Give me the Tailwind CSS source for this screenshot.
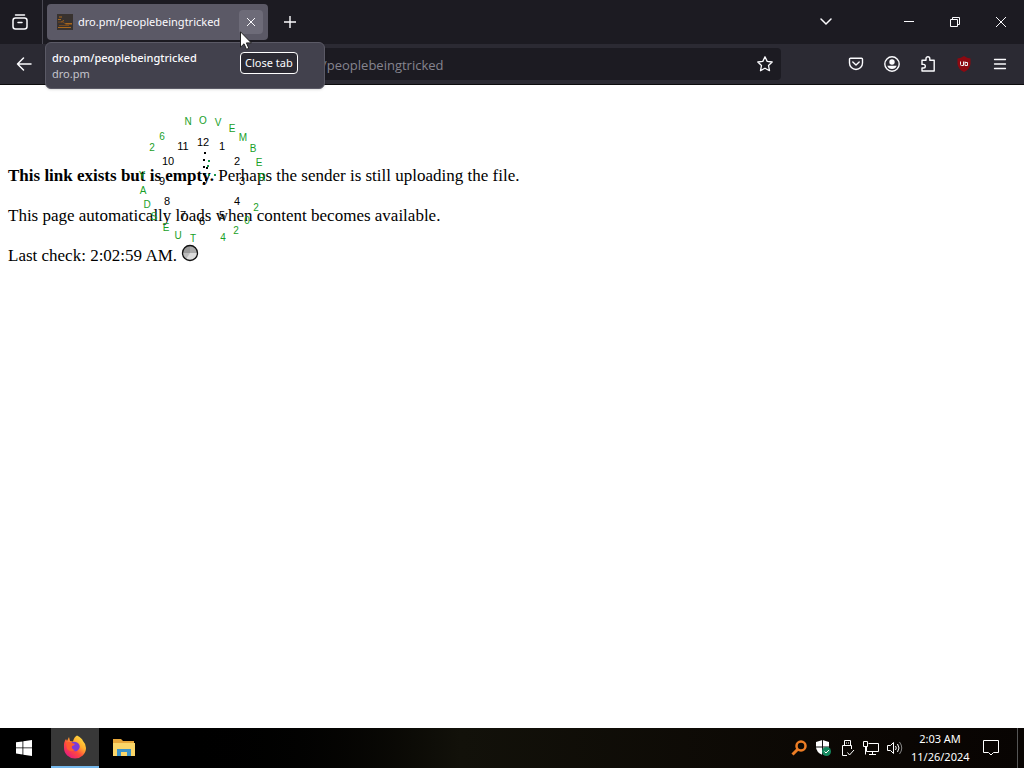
<!DOCTYPE html>
<html lang="en">
<head>
<meta charset="utf-8">
<title>dro.pm/peoplebeingtricked</title>
<script src="https://cdn.jsdelivr.net/npm/@tailwindcss/browser@4"></script>
</head>
<body class="min-h-screen flex flex-col bg-white font-['Noto_Sans',sans-serif] text-[11px]">

<header class="relative text-[#fbfbfe]">
  <div class="h-11 flex items-center bg-[#1c1b22]">
    <button aria-label="Firefox View" class="w-[43px] h-11 shrink-0 flex items-center pl-3 border-r border-[#4a4953]">
      <svg class="size-4" viewBox="0 0 16 16" fill="none" stroke="currentColor" stroke-width="1.500" stroke-linecap="round"><path d="M3.500 1H12.500"/><rect x="1" y="4" width="14" height="11" rx="2.500"/><path d="M6 8.500H10"/></svg>
    </button>
    <div class="ml-1 h-9 w-[221px] flex items-center rounded bg-[#5b5966] pl-[10px] pr-[5px]">
      <svg class="size-4 shrink-0" viewBox="0 0 16 16"><rect width="16" height="16" fill="#38322f"/><path d="M2 3H5M1 5.500H4M4 8L7 6.500M8 9.500H15M1 13.500H14" stroke="#a8681c" fill="none"/><path d="M1 8H6L9 10.500H15M2 11.500H12" stroke="#74491f" fill="none"/></svg>
      <span class="ml-[5px] grow whitespace-nowrap">dro.pm/peoplebeingtricked</span>
      <button aria-label="Close tab" class="size-6 flex items-center justify-center rounded bg-[#6d6b78]">
        <svg class="size-2" viewBox="0 0 8 8" fill="none" stroke="currentColor"><path d="M0 0L8 8M8 0L0 8"/></svg>
      </button>
    </div>
    <button aria-label="New tab" class="ml-4 grow flex">
      <svg class="size-3" viewBox="0 0 12 12" fill="none" stroke="currentColor" stroke-width="1.400"><path d="M6 0V12M0 6H12"/></svg>
    </button>
    <button aria-label="List all tabs" class="mr-[44px] w-8 flex justify-center">
      <svg class="w-3 h-2" viewBox="0 0 12 8" fill="none" stroke="currentColor" stroke-width="1.500" stroke-linecap="round"><path d="M1 1L6 6L11 1"/></svg>
    </button>
    <button aria-label="Minimize" class="w-[46px] flex justify-center"><svg class="size-[10px]" viewBox="0 0 10 10" stroke="currentColor"><path d="M0 4.500H10"/></svg></button>
    <button aria-label="Restore" class="w-[46px] flex justify-center"><svg class="size-[10px]" viewBox="0 0 10 10" fill="none" stroke="currentColor"><path d="M.5 2.500H7.500V9.500H.5ZM2.500 2.500V.5H9.500V7.500H7.500"/></svg></button>
    <button aria-label="Close" class="w-[46px] flex justify-center"><svg class="size-[10px]" viewBox="0 0 10 10" fill="none" stroke="currentColor"><path d="M0 0L10 10M10 0L0 10"/></svg></button>
  </div>

  <div class="h-[41px] flex items-center bg-[#2b2a33] border-b border-[#0c0c0d] pl-4">
    <button aria-label="Back" class="size-4 shrink-0"><svg class="size-4" viewBox="0 0 16 16" fill="none" stroke="currentColor" stroke-width="1.500" stroke-linecap="round" stroke-linejoin="round"><path d="M15 8H1.500M7.500 2L1.500 8L7.500 14"/></svg></button>
    <div class="ml-[13px] h-8 grow flex items-center rounded bg-[#1c1b22] pr-2">
      <input aria-label="Address" value="/peoplebeingtricked" class="grow min-w-0 bg-transparent pl-[277px] pt-[3px] font-['Open_Sans',sans-serif] text-[13px] text-[#85848f] outline-none">
      <button aria-label="Bookmark this page"><svg class="size-4" viewBox="0 0 16 16" fill="none" stroke="currentColor" stroke-width="1.300" stroke-linejoin="round"><path d="M8 .8L10.200 5.400L15.200 6L11.500 9.500L12.500 14.700L8 12.200L3.500 14.700L4.500 9.500L.8 6L5.800 5.400Z"/></svg></button>
    </div>
    <nav class="ml-[67px] mr-4 flex items-center gap-5">
      <button aria-label="Save to Pocket"><svg class="size-4" viewBox="0 0 16 16" fill="none" stroke="currentColor" stroke-width="1.400" stroke-linecap="round" stroke-linejoin="round"><path d="M2.500 2.200H13.500A1 1 0 0 1 14.500 3.200V7A6.500 6.500 0 0 1 1.500 7V3.200A1 1 0 0 1 2.500 2.200ZM4.800 6L8 9L11.200 6"/></svg></button>
      <button aria-label="Account"><svg class="size-4" viewBox="0 0 16 16"><circle cx="8" cy="8" r="7.200" fill="none" stroke="currentColor" stroke-width="1.400"/><circle cx="8" cy="6" r="2.700" fill="currentColor"/><path d="M3.300 9.800H12.700A5 5 0 0 1 3.300 9.800Z" fill="currentColor"/></svg></button>
      <button aria-label="Extensions"><svg class="size-4" viewBox="0 0 16 16" fill="none" stroke="currentColor" stroke-width="1.400" stroke-linejoin="round"><path d="M2 7V4.200H6V2.600A1.900 1.900 0 0 1 9.800 2.600V4.200H14.200V15H2V12H3.500A1.800 1.800 0 0 0 3.500 8.400H2Z"/></svg></button>
      <button aria-label="uBlock Origin"><svg class="size-4" viewBox="0 0 16 16"><path d="M8 0Q11 2 14.500 2.500V8Q14 13 8 16Q2 13 1.500 8V2.500Q5 2 8 0Z" fill="#8d0911"/><path d="M4.500 5.500V8.500Q4.500 9.500 5.500 9.500H7.500V5.500M9 5.500V9.500H11.500V6.500H9" fill="none" stroke="#eee"/></svg></button>
      <button aria-label="Menu"><svg class="size-4" viewBox="0 0 16 16" stroke="currentColor" stroke-width="1.300" stroke-linecap="round"><path d="M2.500 3.500H13.500M2.500 8H13.500M2.500 12.500H13.500"/></svg></button>
    </nav>
  </div>

  <div class="absolute left-[45px] top-[42px] w-[280px] h-[47px] z-10 rounded-md border border-[#5b5a66] bg-[#42414d] px-[6px] pt-[7px] leading-4 shadow">
    <p class="font-medium">dro.pm/peoplebeingtricked</p>
    <p class="text-[#c4c4cc]">dro.pm</p>
  </div>
  <div role="tooltip" class="absolute left-[240px] top-[52px] z-20 h-[22px] rounded border border-white bg-[#2b2a33] px-1 leading-5 whitespace-nowrap">Close tab</div>
  <svg class="absolute left-[240px] top-[31px] z-30 w-3 h-[19px]" viewBox="0 0 12 19"><path d="M.5 .8V16.200L4 12.800L6.500 18.300L8.800 17.300L6.400 11.900H11.300Z" fill="#fff" stroke="#222"/></svg>
</header>

<main class="relative grow px-2 pt-[81px] font-['Liberation_Serif',serif] text-[17px] leading-5 text-black">
  <p class="mb-5"><b>This link exists but is empty.</b> Perhaps the sender is still uploading the file.</p>
  <p class="mb-5">This page automatically loads when content becomes available.</p>
  <p class="flex">Last check: 2:02:59 AM.
    <svg class="ml-1 -mt-[2px] size-[18px]" viewBox="0 0 18 18"><circle cx="9" cy="9" r="7.500" fill="#ddd"/><path d="M9 9H1.500A7.500 7.500 0 0 1 9 1.500Z" fill="#999"/><path d="M9 9V1.500A7.500 7.500 0 0 1 16.500 9Z" fill="#aaa"/><path d="M9 9H1.500A7.500 7.500 0 0 0 5 15.300Z" fill="#bbb"/><circle cx="9" cy="9" r="7.500" fill="none" stroke="#111" stroke-width="1.300"/></svg>
  </p>

  <svg class="absolute left-[133px] top-[25px] w-[140px] h-[140px] font-['Liberation_Sans',sans-serif]" viewBox="133 110 140 140" text-anchor="middle">
    <g font-size="10" fill="#18a028">
      <text x="188" y="125">N</text><text x="203" y="124">O</text><text x="218" y="126">V</text><text x="232" y="132">E</text><text x="243" y="141">M</text><text x="253" y="152">B</text><text x="259" y="166">E</text><text x="262" y="181">R</text>
      <text x="256" y="211">2</text><text x="247" y="224">0</text><text x="236" y="234">2</text><text x="223" y="241">4</text>
      <text x="193" y="242">T</text><text x="178" y="239">U</text><text x="166" y="231">E</text><text x="154" y="220">S</text><text x="147" y="208">D</text><text x="143" y="194">A</text><text x="142" y="179">Y</text>
      <text x="152" y="151">2</text><text x="162" y="140">6</text>
    </g>
    <g font-size="11" fill="#000">
      <text x="203" y="146">12</text><text x="222" y="150">1</text><text x="237" y="165">2</text><text x="242" y="185">3</text><text x="237" y="205">4</text><text x="222" y="219">5</text><text x="202" y="225">6</text><text x="183" y="219">7</text><text x="167" y="205">8</text><text x="162" y="185">9</text><text x="168" y="165">10</text><text x="183" y="150">11</text>
    </g>
    <g fill="#000"><path d="M204 152h2v2h-2zM203 159h2v2h-2zM203 166h2v2h-2zM206 167h2v2h-2zM203 173h2v2h-2zM203 182h2v2h-2zM205 179h2v2h-2z"/></g>
    <g fill="#159447"><path d="M208 160h2v2h-2zM207 165h2v2h-2zM208 174h2v2h-2zM214 174h2v2h-2z"/></g>
  </svg>
</main>

<footer class="h-10 flex items-center bg-linear-to-r from-black from-15% via-[#12110a] via-45% to-[#080402] text-white">
  <button aria-label="Start" class="w-[51px] h-10 flex items-center pl-4"><svg class="size-4" viewBox="0 0 16 16" fill="#fff"><path d="M0 2.300L6.500 1.400V7.500H0ZM7.300 1.300L16 0V7.500H7.300ZM0 8.300H6.500V14.500L0 13.600ZM7.300 8.300H16V16L7.300 14.700Z"/></svg></button>
  <button aria-label="Firefox" class="w-12 h-10 flex items-center justify-center bg-[#383838] border-b-2 border-[#76b9ed]">
    <svg class="size-6" viewBox="0 0 24 24"><defs><linearGradient id="fx" x1="1" y1="0" x2="0.200" y2="1"><stop offset="0" stop-color="#fff14a"/><stop offset=".4" stop-color="#ffad2e"/><stop offset=".65" stop-color="#ff4a3c"/><stop offset="1" stop-color="#e31587"/></linearGradient></defs><path d="M14 .5Q19 3 20 6Q23 9 23 13A11 10.500 0 0 1 1 13Q.5 7 3 4L4 6L6 2L7 6L10 6.500Q11 2 14 .5Z" fill="url(#fx)"/><path d="M7 9Q10 5 15 8Q19 12 14 16Q9 17 7 13Z" fill="#7b3bd8"/><path d="M3 8Q6 6 9 8L12 9Q11 11 9 11Q8 14 12 15Q8 18 4 14Z" fill="#ff5b30"/></svg>
  </button>
  <button aria-label="File Explorer" class="w-[49px] h-10 flex items-center justify-center"><svg class="w-[22px] h-[18px]" viewBox="0 0 22 18"><path d="M0 0H8L10 2H21V5H0Z" fill="#e8a73a"/><path d="M0 4H22V17H0Z" fill="#fbd668"/><path d="M4 10H18V17H14V13H8V17H4Z" fill="#3c93c9"/></svg></button>
  <div class="ml-auto flex items-center gap-2">
    <svg class="size-4" viewBox="0 0 16 16" fill="none" stroke="#ed7d25"><circle cx="10" cy="6" r="4.500" stroke-width="2.500"/><path d="M7 9L1.500 14.500" stroke-width="3"/></svg>
    <svg class="size-4" viewBox="0 0 16 16"><path d="M7.500 0L14 2V7Q13 12 7.500 15Q1 12 1 7V2Z" fill="#fff"/><path d="M7.500 0V15M1 7H14" stroke="#111"/><circle cx="11.500" cy="11.500" r="4.500" fill="#168a60"/><path d="M9.500 11.500L11 13L14 10" fill="none" stroke="#fff"/></svg>
    <svg class="size-4" viewBox="0 0 16 16" fill="none" stroke="#fff"><path d="M5.500 5V.5H11.500V5M3.500 5.500H12.500V9M3.500 5.500V15.500H8M7 3H8M9 3H10M8.500 12.500L10.500 15L15 10"/></svg>
    <svg class="size-4" viewBox="0 0 16 16" fill="none" stroke="#fff"><path d="M5.500 3.500H15.500V11.500H3.500V7M.5 1.500H4.500V6.500H.5ZM2.500 6.500V14.500M6 14.500H13M9.500 11.500V14.500"/></svg>
    <svg class="size-4" viewBox="0 0 16 16" fill="none" stroke="#fff"><path d="M.5 5.500H3.500L6.500 2.500V13.500L3.500 10.500H.5ZM8.500 6Q10 8 8.500 10M10.500 4Q13.500 8 10.500 12"/><path d="M12.500 2Q17 8 12.500 14" stroke="#888"/></svg>
    <time class="w-[58px] text-center leading-[18px] whitespace-nowrap">2:03 AM<br>11/26/2024</time>
  </div>
  <button aria-label="Notifications" class="ml-[14px] w-[35px] h-10 flex items-center border-r border-[#555]"><svg class="w-4 h-4" viewBox="0 0 16 16" fill="none" stroke="#fff"><path d="M.5 .5H15.500V12.500H10.500L8 15L5.500 12.500H.5Z"/></svg></button>
  <span class="w-[6px]"></span>
</footer>
</body>
</html>
